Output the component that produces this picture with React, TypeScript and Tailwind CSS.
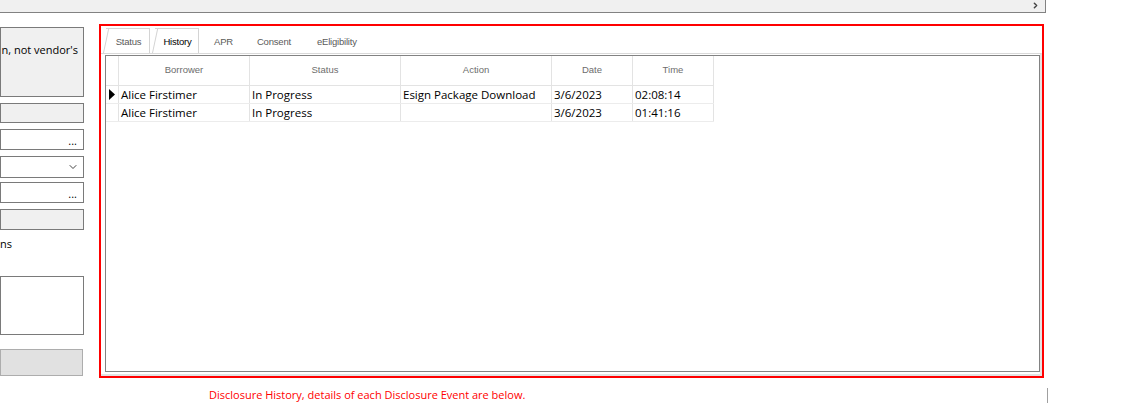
import { ChevronDown, ChevronRight } from "lucide-react"

type Col = { label: string; width: string }

const cols: Col[] = [
  { label: "", width: "w-[13px]" },
  { label: "Borrower", width: "w-[131px]" },
  { label: "Status", width: "w-[151px]" },
  { label: "Action", width: "w-[151px]" },
  { label: "Date", width: "w-[81px]" },
  { label: "Time", width: "w-[81px]" },
]

const rows = [
  { current: true, cells: ["Alice Firstimer", "In Progress", "Esign Package Download", "3/6/2023", "02:08:14"] },
  { current: false, cells: ["Alice Firstimer", "In Progress", "", "3/6/2023", "01:41:16"] },
]

const ui = "font-['Open_Sans','Noto_Sans',sans-serif]"
const small = "font-['Liberation_Sans',Arial,sans-serif]"

const Tab = ({ label, framed, active, pad }: { label: string; framed?: boolean; active?: boolean; pad?: string }) => {
  if (!framed) {
    return (
      <div className={`flex h-[25px] items-center pt-[3px] text-[9.5px] tracking-[-0.2px] text-[#5a5a5a] ${small} ${pad}`}>
        {label}
      </div>
    )
  }
  return (
    <div className="relative ml-[5px] flex h-[25px] w-[44px] items-center justify-center border-t border-r border-[#d4d4d4] pt-[3px] pl-[2px]">
      <span className="absolute bottom-0 left-[-3px] h-[25px] w-px origin-bottom rotate-[12deg] bg-[#d4d4d4]" />
      <span className={`text-[9.5px] tracking-[-0.2px] ${small} ${active ? "text-black" : "text-[#5a5a5a]"}`}>{label}</span>
    </div>
  )
}

const Box = ({ className, children }: { className: string; children?: React.ReactNode }) => (
  <div className={`w-[84px] border border-[#7a7a7a] ${className}`}>{children}</div>
)

export default function App() {
  return (
    <div className={`h-[403px] w-[1144px] overflow-hidden bg-white text-black ${ui}`}>
      <div className="flex h-[13px] w-[1046px] items-start justify-end border-r border-b border-[#828282] bg-[#f0f0f0] pt-[1px] pr-[5px]">
        <ChevronRight className="size-[9px] text-[#444]" strokeWidth={4} />
      </div>

      <div className="flex">
        {/* left column, mostly clipped */}
        <div className="flex flex-col pt-[14px]">
          <Box className="h-[70px] bg-[#f0f0f0] pt-[14px] pr-[5px] text-[11px] whitespace-nowrap">
            <div className="flex justify-end">n, not vendor's</div>
          </Box>
          <Box className="mt-[6px] h-[20px] bg-[#f0f0f0]" />
          <Box className="mt-[6px] flex h-[21px] items-end justify-end pr-[6px] pb-[3px] text-[11px] leading-none">
            ...
          </Box>
          <Box className="mt-[6px] flex h-[22px] items-center justify-end pr-[4px]">
            <ChevronDown className="size-[12px] text-[#444]" strokeWidth={2} />
          </Box>
          <Box className="mt-[4px] flex h-[21px] items-end justify-end pr-[6px] pb-[3px] text-[11px] leading-none">
            ...
          </Box>
          <Box className="mt-[6px] h-[21px] bg-[#f0f0f0]" />
          <div className="mt-[6px] flex h-[16px] w-[84px] items-center text-[11px]">ns</div>
          <Box className="mt-[24px] h-[59px] bg-white" />
          <div className="mt-[14px] h-[27px] w-[83px] border border-[#adadad] bg-[#e1e1e1]" />
        </div>

        {/* right column */}
        <div className="ml-[15px] flex flex-col pt-[11px]">
          <div className="flex h-[354px] w-[945px] flex-col border-2 border-[#ff0000]">
            <div className="flex h-[27px] items-end">
              <Tab label="Status" framed />
              <Tab label="History" framed active />
              <Tab label="APR" pad="pl-[15px]" />
              <Tab label="Consent" pad="pl-[24px]" />
              <Tab label="eEligibility" pad="pl-[26px]" />
            </div>
            <div className="flex-1 border-t border-r-2 border-b-2 border-[#e3e3e3] border-t-[#d9d9d9] pt-[1px] pl-[4px]">
              <div className="h-[317px] w-[935px] border border-[#828282] bg-white">
                <div className="w-fit">
                  <div className="flex h-[30px] border-b border-[#e3e3e3]">
                    {cols.map((c, i) => (
                      <div
                        key={i}
                        className={`flex items-center justify-center border-r border-[#e3e3e3] text-[9.5px] text-[#6d6d6d] ${small} ${c.width}`}
                      >
                        {c.label}
                      </div>
                    ))}
                  </div>
                  {rows.map((r, ri) => (
                    <div key={ri} className="flex h-[18px] border-b border-[#ececec]">
                      <div className={`flex items-center justify-center border-r border-[#e3e3e3] ${cols[0].width}`}>
                        {r.current && (
                          <svg width="6" height="11" viewBox="0 0 6 11">
                            <polygon points="0,0 6,5.5 0,11" fill="#000" />
                          </svg>
                        )}
                      </div>
                      {r.cells.map((cell, ci) => (
                        <div
                          key={ci}
                          className={`flex items-center overflow-hidden border-r border-[#e3e3e3] pl-[2px] text-[11.5px] whitespace-nowrap ${cols[ci + 1].width}`}
                        >
                          {cell}
                        </div>
                      ))}
                    </div>
                  ))}
                </div>
              </div>
            </div>
          </div>
          <div className="mt-[9px] flex pl-[110px] text-[11px] leading-[16px] text-[#ff0000]">
            Disclosure History, details of each Disclosure Event are below.
          </div>
        </div>

        <div className="ml-[3px] mt-[375px] h-[20px] w-px bg-[#a0a0a0]" />
      </div>
    </div>
  )
}
